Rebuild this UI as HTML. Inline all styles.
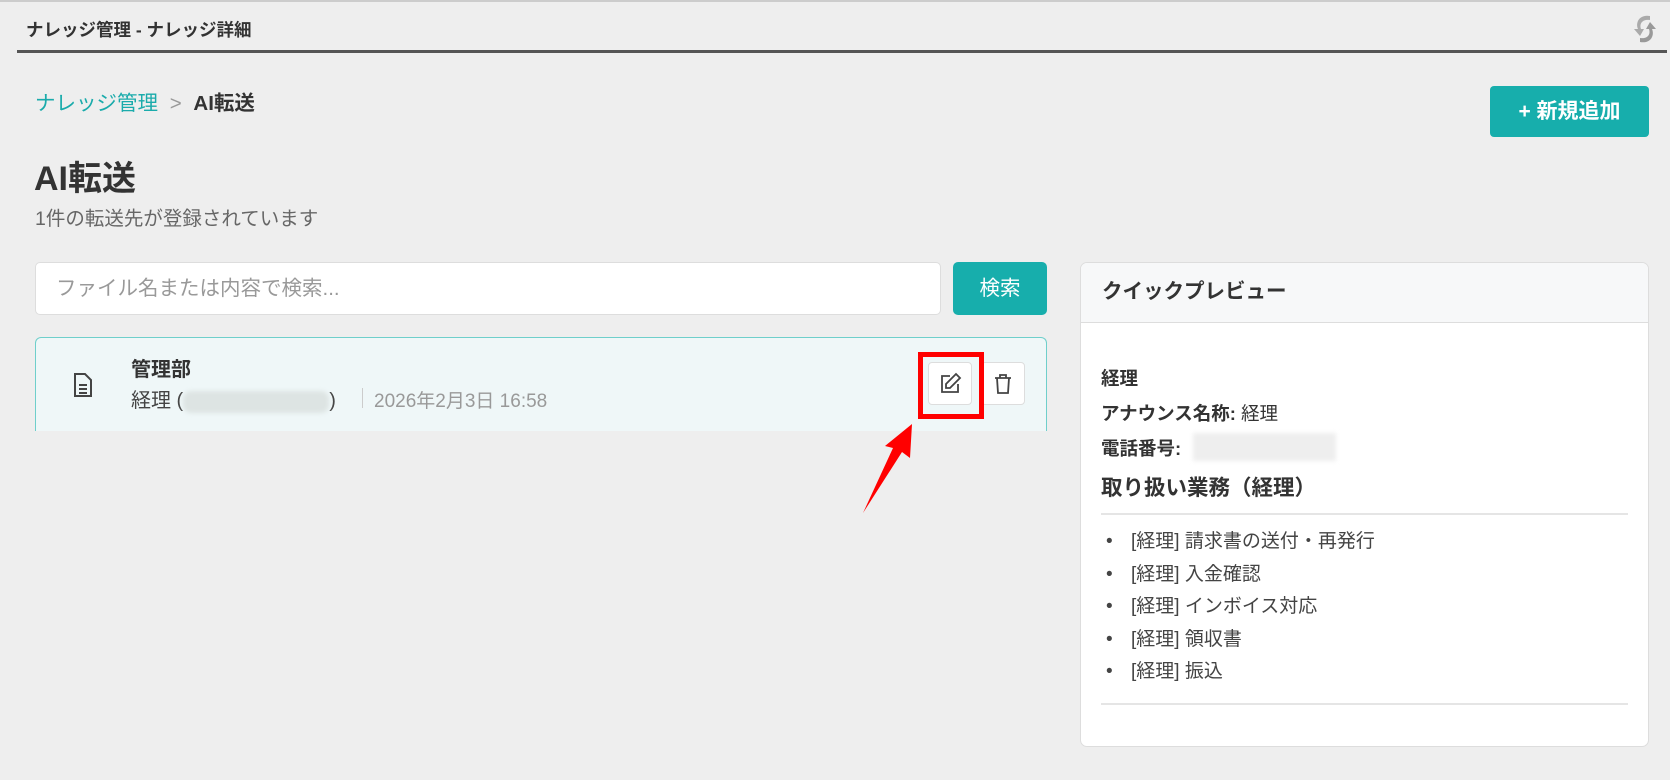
<!DOCTYPE html>
<html><head><meta charset="utf-8"><style>
*{box-sizing:border-box;margin:0;padding:0}
body{width:1670px;height:780px;background:#eeeeee;font-family:"Liberation Sans","Noto Sans CJK JP",sans-serif;color:#333;position:relative;overflow:hidden}
.a{position:absolute;white-space:nowrap}
</style></head><body>
<div class="a" style="left:0;top:0;width:1670px;height:2px;background:#ccc"></div>
<div class="a" style="left:26px;top:17px;font-size:17.5px;font-weight:bold;color:#333">ナレッジ管理 - ナレッジ詳細</div>
<svg class="a" style="left:1630px;top:12px" width="30" height="34" viewBox="0 0 30 34"><path d="M20 4 C10 2 5 10 8 17 L4 17 L10 24 L14 17 L11 17 C9 11 13 7 20 8Z" fill="#aaa"/><path d="M10 30 C20 32 25 24 22 17 L26 17 L20 10 L16 17 L19 17 C21 23 17 27 10 26Z" fill="#999"/></svg>
<div class="a" style="left:17px;top:50px;width:1650px;height:3px;background:#555"></div>

<div class="a" style="left:35px;top:86px;font-size:20.5px;color:#1aabab">ナレッジ管理 <span style="color:#999;margin:0 6px">&gt;</span> <b style="color:#333">AI転送</b></div>
<div class="a" style="left:1490px;top:86px;width:159px;height:51px;background:#17aeac;border-radius:4px;color:#fff;font-size:21px;font-weight:bold;text-align:center;line-height:51px">+ 新規追加</div>
<div class="a" style="left:34px;top:151px;font-size:34px;font-weight:bold;color:#333">AI転送</div>
<div class="a" style="left:35px;top:202px;font-size:19.5px;color:#666">1件の転送先が登録されています</div>

<div class="a" style="left:35px;top:262px;width:906px;height:53px;background:#fff;border:1px solid #ddd;border-radius:5px;font-size:20.5px;color:#999;line-height:51px;padding-left:20px">ファイル名または内容で検索...</div>
<div class="a" style="left:953px;top:262px;width:94px;height:53px;background:#17aeac;border-radius:5px;color:#fff;font-size:20.5px;text-align:center;line-height:53px">検索</div>

<div class="a" style="left:35px;top:337px;width:1012px;height:94px;background:#eff7f8;border:1px solid #6fcfcb;border-bottom:none;border-radius:6px 6px 0 0"></div>
<svg class="a" style="left:72px;top:372px" width="22" height="26" viewBox="0 0 22 26" fill="none" stroke="#444" stroke-width="2"><path d="M3 2h10l6 6v16H3z"/><path d="M7 13h8M7 17h8M7 21h8"/></svg>
<div class="a" style="left:131px;top:353px;font-size:20px;font-weight:bold;color:#333">管理部</div>
<div class="a" style="left:131px;top:384px;font-size:20px;color:#444">経理 (<span style="display:inline-block;width:146px;height:22px;background:#dde4e3;vertical-align:middle;border-radius:8px;filter:blur(2px)"></span>)</div>
<div class="a" style="left:362px;top:388px;width:1px;height:20px;background:#ccc"></div>
<div class="a" style="left:374px;top:386px;font-size:19px;color:#999">2026年2月3日 16:58</div>
<div class="a" style="left:928px;top:362px;width:44px;height:43px;background:#fff;border:1px solid #ddd;border-radius:4px"></div>
<svg class="a" style="left:938px;top:372px" width="24" height="24" viewBox="0 0 24 24" fill="none" stroke="#444" stroke-width="1.8"><path d="M12 4H4v16h16v-8"/><path d="M18 2l4 4-10 10H8v-4z"/></svg>
<div class="a" style="left:981px;top:362px;width:44px;height:43px;background:#fff;border:1px solid #ddd;border-radius:4px"></div>
<svg class="a" style="left:992px;top:372px" width="22" height="24" viewBox="0 0 22 24" fill="none" stroke="#444" stroke-width="1.8"><path d="M3 6h16M8 6V3h6v3M5 6l1 15h10l1-15"/></svg>
<div class="a" style="left:918px;top:352px;width:66px;height:67px;border:5px solid #f00"></div>
<svg class="a" style="left:855px;top:420px" width="70" height="100" viewBox="0 0 70 100"><path d="M8 93 L38 28 L30 26 L57 4 L55 38 L47 32 Z" fill="#f00"/></svg>

<div class="a" style="left:1080px;top:262px;width:569px;height:485px;background:#fff;border:1px solid #ddd;border-radius:7px;overflow:hidden">
<div style="height:60px;background:#f7f8f9;border-bottom:1px solid #ddd;font-size:20.5px;font-weight:bold;line-height:58px;padding-left:21px;color:#333">クイックプレビュー</div>
</div>
<div class="a" style="left:1101px;top:365px;font-size:18.5px;font-weight:bold">経理</div>
<div class="a" style="left:1101px;top:400px;font-size:18.5px"><b>アナウンス名称:</b> 経理</div>
<div class="a" style="left:1101px;top:435px;font-size:18.5px;font-weight:bold">電話番号:</div>
<div class="a" style="left:1193px;top:433px;width:143px;height:28px;background:#eee;filter:blur(2px)"></div>
<div class="a" style="left:1101px;top:471px;font-size:21.5px;font-weight:bold">取り扱い業務（経理）</div>
<div class="a" style="left:1101px;top:513px;width:527px;height:2px;background:#e5e5e5"></div>
<div class="a" style="left:1106px;top:526px;font-size:19px;line-height:32.5px;color:#444">
<div><span style="display:inline-block;width:25px">•</span>[経理] 請求書の送付・再発行</div><div><span style="display:inline-block;width:25px">•</span>[経理] 入金確認</div><div><span style="display:inline-block;width:25px">•</span>[経理] インボイス対応</div><div><span style="display:inline-block;width:25px">•</span>[経理] 領収書</div><div><span style="display:inline-block;width:25px">•</span>[経理] 振込</div></div>
<div class="a" style="left:1101px;top:703px;width:527px;height:2px;background:#e5e5e5"></div>
</body></html>
